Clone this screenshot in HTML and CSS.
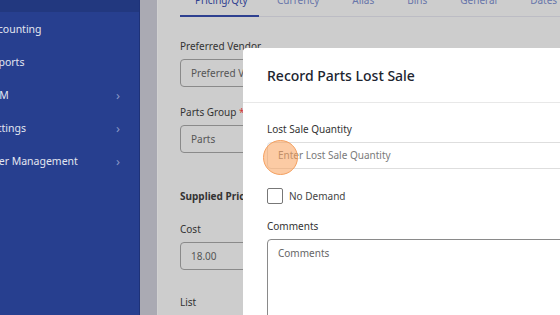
FILE: index.html
```html
<!DOCTYPE html>
<html lang="en">
<head>
    <meta charset="UTF-8">
    <meta name="viewport" content="width=device-width, initial-scale=1.0">
    <title>Parts</title>
    <link rel="stylesheet" href="styles.css">
</head>
<body>

    <!-- Sidebar -->
    <aside class="sidebar">
        <div class="sidebar-top"></div>
        <ul class="nav">
            <li>Accounting</li>
            <li>Reports</li>
            <li>CRM <span class="chev">&#8250;</span></li>
            <li>Settings <span class="chev">&#8250;</span></li>
            <li>User Management <span class="chev">&#8250;</span></li>
        </ul>
    </aside>
    <div class="scroll-strip"></div>

    <!-- Main content -->
    <main class="main">
        <div class="tabs">
            <span class="tab active">Pricing/Qty</span>
            <span class="tab">Currency</span>
            <span class="tab">Alias</span>
            <span class="tab">Bins</span>
            <span class="tab">General</span>
            <span class="tab">Dates</span>
        </div>

        <div class="form">
            <div class="field">
                <label>Preferred Vendor</label>
                <div class="input">Preferred Vendor</div>
            </div>
            <div class="field">
                <label>Parts Group <span class="req">*</span></label>
                <div class="input">Parts</div>
            </div>
            <h4 class="section">Supplied Pricing</h4>
            <div class="field">
                <label>Cost</label>
                <div class="input">18.00</div>
            </div>
            <div class="field">
                <label class="last">List</label>
            </div>
        </div>
    </main>

    <!-- Modal -->
    <div class="modal">
        <div class="modal-header">
            <h2>Record Parts Lost Sale</h2>
        </div>
        <div class="modal-body">
            <label class="m-label">Lost Sale Quantity</label>
            <div class="m-input">Enter Lost Sale Quantity</div>
            <div class="check-row">
                <span class="checkbox"></span>
                <span>No Demand</span>
            </div>
            <label class="m-label">Comments</label>
            <div class="m-textarea">Comments</div>
        </div>
    </div>

    <!-- click marker -->
    <div class="click-dot"></div>

</body>
</html>
```

FILE: styles.css
```css
* {
    margin: 0;
    padding: 0;
    box-sizing: border-box;
}

body {
    width: 560px;
    height: 315px;
    overflow: hidden;
    display: flex;
    font-family: "Noto Sans", "Open Sans", sans-serif;
    font-size: 10px;
    color: #333;
    background: #cdcdcd;
}

/* Sidebar */
.sidebar {
    width: 140px;
    flex-shrink: 0;
    background: #273f8f;
    border-right: 1px solid #1e3278;
    overflow: hidden;
}

.sidebar-top {
    height: 12px;
    background: #22387f;
}

.nav {
    list-style: none;
    margin-left: -14px;
}

.nav li {
    height: 33px;
    display: flex;
    align-items: center;
    justify-content: space-between;
    padding-right: 19px;
    color: #e3e6f0;
    font-size: 10.5px;
}

.chev {
    color: #8796c6;
    font-size: 13px;
}

.scroll-strip {
    width: 18px;
    flex-shrink: 0;
    background: #aaaab3;
    border-right: 1px solid #d2d2d2;
}

/* Main */
.main {
    flex: 1;
    padding-left: 22px;
}

.tabs {
    display: flex;
    gap: 3px;
    height: 17px;
    border-bottom: 1px solid #bcbcc4;
}

.tab {
    color: #6876aa;
    padding: 0 15px;
    line-height: 0;
    height: 17px;
}

.tab.active {
    width: 79px;
    text-align: center;
    color: #2f4090;
    border-bottom: 2px solid #2e4090;
}

.form {
    padding-top: 22px;
}

.field label {
    display: block;
    line-height: 14px;
    color: #333;
    margin-bottom: 6px;
}

.field label.last {
    margin-top: 25px;
}

.req {
    color: #d23a3a;
}

.input {
    width: 200px;
    height: 28px;
    border: 1px solid #8a8a8a;
    border-radius: 4px;
    padding-left: 10px;
    line-height: 26px;
    color: #555;
    margin-bottom: 18px;
    white-space: nowrap;
    overflow: hidden;
}

.section {
    font-size: 10px;
    line-height: 14px;
    font-weight: 700;
    color: #333;
    margin: 36px 0 19px;
}

/* Modal */
.modal {
    position: absolute;
    left: 243px;
    top: 48px;
    width: 400px;
    height: 300px;
    background: #fff;
    border-radius: 4px 0 0 0;
}

.modal-header {
    height: 55px;
    padding: 0 24px;
    display: flex;
    align-items: center;
    border-bottom: 1px solid #e8e8e8;
}

.modal-header h2 {
    font-size: 14px;
    font-weight: 500;
    color: #20242f;
}

.modal-body {
    padding: 19px 24px 0;
}

.m-label {
    display: block;
    line-height: 14px;
    color: #333;
    margin-bottom: 6px;
}

.m-input {
    height: 27px;
    border: 1px solid #dedede;
    border-radius: 4px;
    padding-left: 10px;
    line-height: 25px;
    color: #7a7a7a;
}

.check-row {
    display: flex;
    align-items: center;
    gap: 6px;
    margin: 19px 0 15px;
    color: #444;
}

.checkbox {
    width: 16px;
    height: 16px;
    border: 1px solid #777;
    border-radius: 2px;
}

.m-textarea {
    height: 90px;
    border: 1px solid #8a8a8a;
    border-radius: 4px;
    padding: 6px 10px;
    color: #666;
}

.click-dot {
    position: absolute;
    left: 263px;
    top: 140px;
    width: 35px;
    height: 35px;
    border-radius: 50%;
    background: rgba(250, 160, 90, 0.55);
    border: 1px solid #f4a060;
}
```
